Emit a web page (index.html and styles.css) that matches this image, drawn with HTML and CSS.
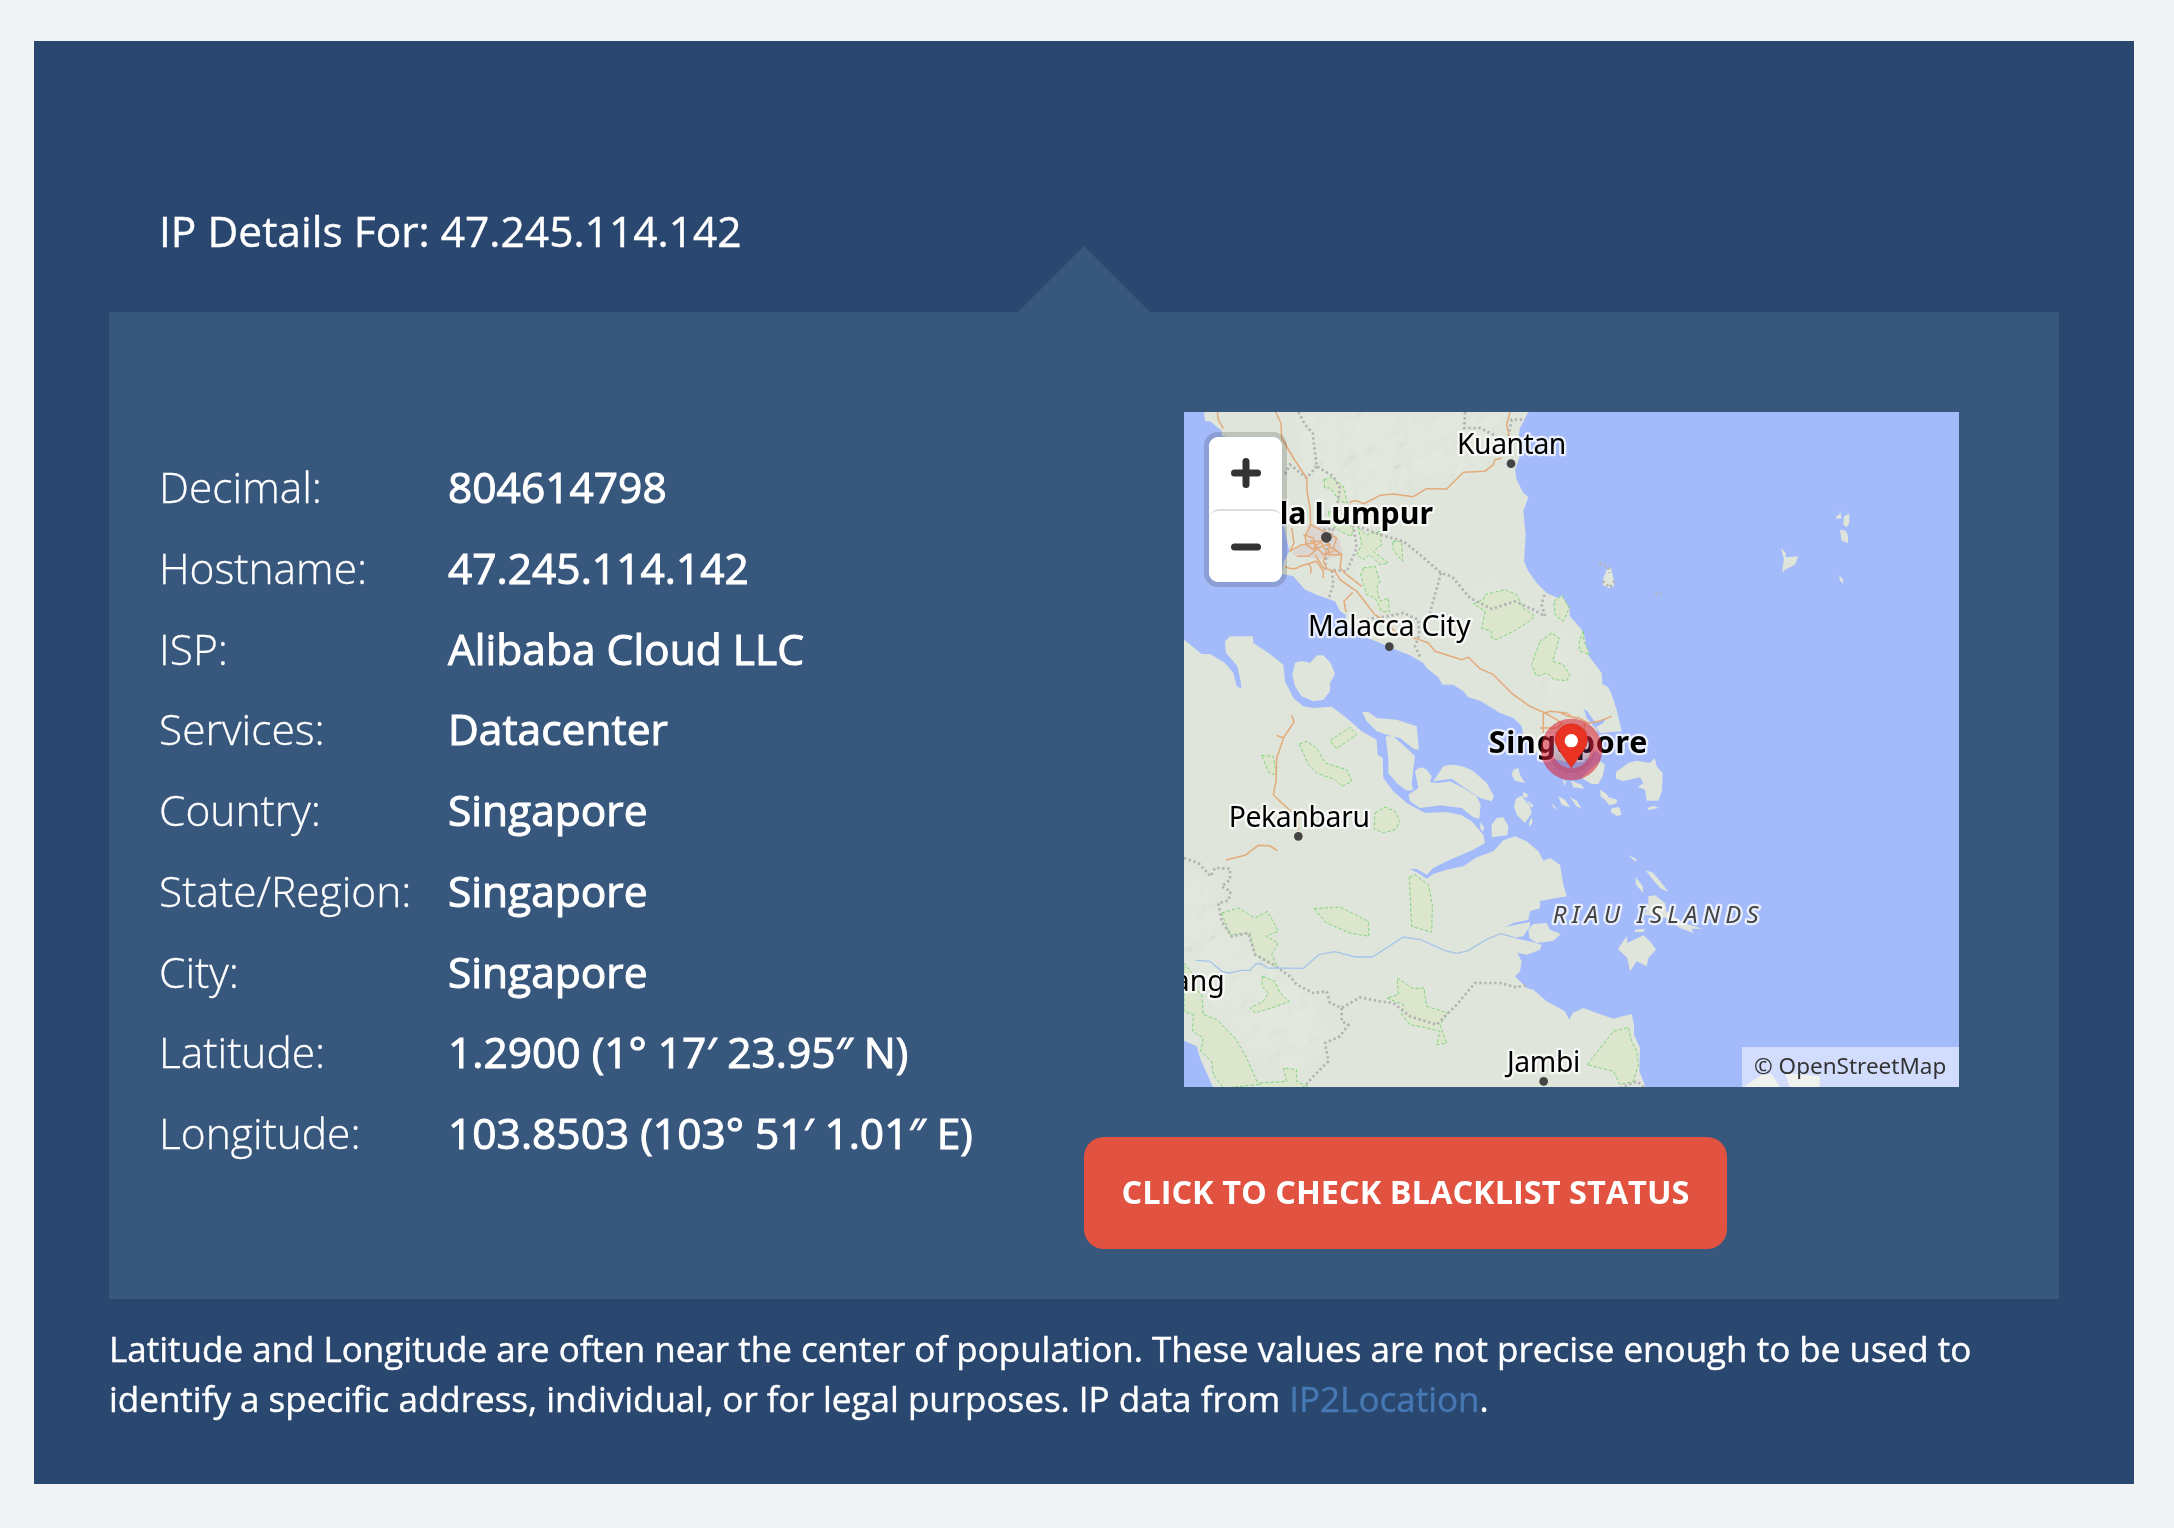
FILE: index.html
```html
<!DOCTYPE html>
<html lang="en">
<head>
<meta charset="utf-8">
<title>IP Details</title>
<link rel="stylesheet" href="styles.css">
</head>
<body>
<main class="card">
  <h1 class="title">IP Details For: 47.245.114.142</h1>
  <section class="panel">
    <dl class="details">
      <dt>Decimal:</dt><dd>804614798</dd>
      <dt>Hostname:</dt><dd>47.245.114.142</dd>
      <dt>ISP:</dt><dd>Alibaba Cloud LLC</dd>
      <dt>Services:</dt><dd>Datacenter</dd>
      <dt>Country:</dt><dd>Singapore</dd>
      <dt>State/Region:</dt><dd>Singapore</dd>
      <dt>City:</dt><dd>Singapore</dd>
      <dt>Latitude:</dt><dd>1.2900 (1° 17′ 23.95″ N)</dd>
      <dt>Longitude:</dt><dd>103.8503 (103° 51′ 1.01″ E)</dd>
    </dl>
    <div class="side">
      <div class="map">
        <svg class="tiles" viewBox="12 12 2325 2025">
          <defs>
            <filter id="relief" x="0" y="0" width="100%" height="100%">
              <feTurbulence type="fractalNoise" baseFrequency="0.012" numOctaves="3" seed="4"/>
              <feDiffuseLighting surfaceScale="40" diffuseConstant="1" lighting-color="#fff"><feDistantLight azimuth="225" elevation="50"/></feDiffuseLighting>
            </filter>
            <filter id="soft"><feGaussianBlur stdDeviation="14"/></filter>
            <mask id="hills" maskUnits="userSpaceOnUse" x="0" y="0" width="2400" height="2100">
              <g fill="#fff" filter="url(#soft)">
                <path d="M330 12H960L900 200 700 220 560 300 620 600 560 560 480 340 400 260Z"/>
                <ellipse cx="960" cy="600" rx="90" ry="90" opacity=".5"/>
                <ellipse cx="1140" cy="790" rx="80" ry="120" opacity=".5"/>
                <path d="M12 1400 100 1420 120 1560 280 1680 400 1760 440 1900 340 2000 180 1900 100 1800 12 1660Z"/>
              </g>
            </mask>
            <path id="land" d="M72 12 75 40 90 40 125 68 125 82 150 90 200 180 290 300 312 355 328 430 312 460 305 497 340 505 375 545 410 560 465 580 480 610 497 620 500 650 540 680 600 705 640 722 690 742 730 765 740 780 775 808 787 830 820 830 850 850 865 868 900 878 960 915 1000 930 1025 955 1030 985 1060 1030 1110 1050 1160 1062 1230 1050 1260 1010 1250 965 1220 930 1212 903 1222 910 1245 942 1278 932 1270 945 1248 958 1260 975 1325 970 1310 905 1295 860 1285 838 1267 828 1265 795 1220 735 1215 690 1205 665 1170 625 1168 600 1145 575 1100 555 1070 525 1045 490 1032 460 1037 380 1030 310 1045 268 1030 255 1010 215 1005 185 1018 150 1015 90 1020 60 1045 12ZM12 695 65 738 90 738 135 765 160 795 170 835 185 842 182 820 172 775 160 760 138 735 135 700 150 685 218 685 220 705 265 735 310 770 315 820 340 870 370 895 400 900 455 896 500 930 545 970 590 995 593 1040 608 1050 610 1110 640 1150 680 1185 735 1215 800 1212 845 1222 875 1240 910 1280 915 1305 880 1325 800 1360 760 1380 740 1400 710 1383 690 1383 715 1395 740 1412 760 1398 800 1385 850 1375 890 1348 940 1330 970 1297 1005 1285 1040 1300 1075 1330 1090 1358 1110 1350 1140 1370 1150 1430 1160 1465 1100 1475 1080 1478 1080 1500 1050 1510 1045 1535 1000 1545 975 1557 1050 1542 1050 1555 1030 1585 1000 1590 1050 1600 1085 1610 1080 1625 1040 1640 1015 1635 1012 1618 1015 1640 1025 1660 1020 1690 1005 1705 1040 1740 1060 1745 1100 1780 1155 1810 1168 1835 1178 1815 1210 1800 1250 1815 1300 1832 1355 1818 1362 1850 1362 1880 1380 1920 1378 1990 1398 2040H100L80 1995 60 1950 50 1915 12 1898ZM345 765Q365 755 390 765L412 742 430 742 452 765 465 798 450 825 450 850 430 875 400 880 365 865 345 835 337 800ZM547 912 565 912 590 930 650 935 710 955 717 1025 700 1022 660 990 620 980 590 970 560 940ZM617 985 640 985 690 1030 705 1045 700 1080 695 1130 700 1145 680 1148 650 1125 625 1095 625 1050ZM705 1090Q720 1070 740 1085L755 1105 750 1122 775 1125 810 1120 850 1140 890 1165 902 1190 898 1232 880 1228 845 1200 780 1192 720 1200 690 1180 685 1160 715 1140ZM760 1120 790 1075Q830 1060 880 1090L920 1125 942 1165 935 1180 900 1170 855 1140 815 1112ZM1000 1085 1015 1080 1020 1100 1035 1125 1005 1118 995 1100ZM1008 1172 1025 1163 1050 1195 1055 1215 1035 1245 1010 1220 1002 1195ZM1030 1152 1045 1160 1040 1170 1028 1165ZM1040 1175 1060 1192 1055 1200ZM1055 1228 1058 1240 1050 1257 1047 1245ZM935 1250 950 1230 970 1228 985 1255 982 1282 935 1288ZM902 1242 912 1258 910 1272 900 1260ZM1045 1565 1060 1548 1100 1545 1110 1565 1143 1578 1120 1598 1070 1605 1048 1590ZM1308 1092 1345 1065 1370 1058 1410 1065 1424 1050 1430 1075 1448 1095 1446 1150 1435 1178 1400 1178 1395 1145 1374 1137 1390 1125 1380 1108 1330 1120 1308 1112ZM1402 1200 1420 1193 1436 1200 1405 1206ZM1205 1110 1245 1070 1262 1060 1275 1070 1268 1105 1255 1128 1235 1128ZM1172 1118 1205 1130 1212 1142 1180 1138ZM1135 1165 1155 1175 1170 1198 1145 1190ZM1170 1168 1190 1178 1205 1202 1190 1195ZM1115 1185 1133 1205 1120 1198ZM1148 1115 1158 1120 1155 1135ZM1260 1145 1280 1158 1285 1168 1312 1175 1308 1187 1288 1192 1275 1175 1262 1165ZM1295 1200 1318 1198 1325 1220 1310 1224 1292 1212ZM1343 1340 1368 1352 1368 1362ZM1367 1407 1388 1435 1390 1455 1368 1430ZM1397 1387 1420 1395 1445 1425 1465 1452 1440 1440 1410 1405ZM1405 1465 1425 1462 1455 1485 1460 1510 1510 1545 1568 1562 1535 1562 1540 1575 1500 1560 1460 1530 1395 1520 1405 1490ZM1365 1565 1395 1562 1390 1572 1365 1572ZM1340 1585 1342 1605 1390 1582 1410 1600 1428 1625 1405 1650 1400 1675 1370 1660 1350 1690 1342 1650 1314 1623ZM1686 2040 1745 2000 1775 1998 1802 2040ZM1815 1995 1920 2005 1918 2040H1830ZM1803 420 1817 435 1818 448 1855 445 1845 470 1815 485 1808 495 1808 475 1812 455ZM1968 325 1978 320 1980 308 1985 330 1970 333ZM1992 325 2008 317 2008 345 2000 358 1990 350ZM1980 365 1998 368 2004 385 2004 405 1985 398ZM1977 502 1988 512 1990 528 1980 518ZM1280 485 1293 480 1300 510 1303 535 1285 540 1268 530 1270 510Z"/>
            <clipPath id="shore"><use href="#land"/></clipPath>
          </defs>
          <use class="land" href="#land"/>
          <g class="relief" clip-path="url(#shore)"><g mask="url(#hills)"><rect width="2400" height="2100" filter="url(#relief)"/></g></g>
          <path class="urban" d="M385 350 440 350 480 400 488 440 440 455 330 440 380 400Z"/>
          <g class="park">
            <path d="M432 215 455 208 490 235 502 285 480 280 450 240 434 240Z"/>
            <path d="M445 310 470 320 490 350 520 355 515 385 480 370 450 345ZM535 360 560 380 600 370 605 410 580 430 625 465 600 470 570 440 550 455 530 440 545 410ZM638 400 665 400 668 460 650 440 640 425Z"/>
            <path d="M550 480 585 475 600 520 590 540 600 580 625 570 628 612 605 610 585 570 560 560 542 500Z"/>
            <path d="M880 588 910 575 915 560 975 545 1010 560 1030 600 1065 625 1040 645 1000 670 950 695 935 690 935 670 905 660 915 610ZM1122 580 1145 562 1168 600 1150 640 1125 620Z"/>
            <path d="M1080 700 1115 675 1138 690 1118 760 1150 770 1170 800 1160 818 1122 815 1100 795 1070 805 1055 770ZM1210 670 1212 700 1230 740 1200 730 1197 700Z"/>
            <path d="M450 998 510 958 530 980 470 1022ZM358 1008 380 1000 410 1020 435 1065 500 1085 516 1120 485 1135 465 1115 410 1095 385 1070ZM244 1042 280 1045 290 1100 268 1095Z"/>
            <path d="M585 1215 615 1197 645 1210 660 1240 645 1265 610 1275 582 1262ZM688 1408 705 1400 745 1430 757 1490 755 1573 695 1555ZM402 1502 480 1497 565 1540 567 1585 510 1575 440 1545Z"/>
            <path d="M125 1515 175 1500 225 1530 262 1510 285 1550 295 1570 258 1585 295 1605 275 1640 295 1680 225 1640 210 1575 150 1580Z"/>
            <path d="M248 1705 285 1720 300 1755 328 1780 290 1795 225 1815 210 1800 250 1780 265 1755 245 1735Z"/>
            <path d="M12 1665 40 1700 45 1740 65 1760 70 1820 110 1835 165 1890 200 1950 235 2030 130 2040 100 2000 95 1960 62 1930 70 1890 38 1870 40 1820 12 1810ZM240 2025 320 2020 310 1980 350 1985 350 2020 390 2040H240Z"/>
            <path d="M652 1710 700 1742 732 1740 740 1795 805 1815 780 1850 800 1905 770 1910 780 1870 740 1860 690 1850 665 1820 670 1790 620 1770 655 1760Z"/>
            <path d="M1222 1970 1300 1870 1345 1858 1355 1900 1370 1930 1375 1970 1360 2020 1320 2030 1300 1990Z"/>
          </g>
          <g class="border">
            <path d="M355 12 375 50 398 75 410 175 460 205 480 240 470 300 520 350 600 380 670 400 720 440 783 495 815 505 870 570 935 603 1005 580 1060 605 1095 625 1085 590 1095 555M783 495 765 560 750 615M410 175 380 210 330 170 312 205M855 12 853 60 900 60 950 85M985 85 995 35 1035 35M520 350 530 420 500 490 455 485 460 530 445 575M430 365 460 362 440 430 435 485M545 635 620 625 670 615 715 635 718 680 705 715 720 745"/>
            <path d="M12 1350 55 1365 92 1405 105 1380 150 1382 150 1415 125 1435 152 1450 145 1478 115 1485 125 1540 155 1585 205 1575 225 1640 280 1670 330 1705 350 1730 400 1755 440 1750 450 1785 485 1800 540 1768 600 1780 640 1785 690 1825 770 1850 830 1790 885 1725 960 1725 1010 1738 1040 1730M485 1800 485 1840 505 1850 480 1885 435 1905 445 1960 400 2005 370 2040M1320 2040 1370 2020 1395 2040"/>
            <path d="M1258 465 1285 478 1288 495M1268 520 1290 538 1303 520M1426 558 1444 558"/>
          </g>
          <path class="river" d="M47 1657 90 1660 125 1690 147 1695 185 1687 210 1687 228 1667 245 1668 262 1680 370 1681 417 1640 465 1631 525 1647 577 1647 670 1587 722 1595 795 1628 830 1636 865 1628 920 1594 962 1577 1003 1588"/>
          <g class="road">
            <path d="M112 12 115 35 130 62M287 12 303 45 305 90 340 150 380 210 382 255 390 300 392 350 375 385 380 410M508 285Q525 270 550 288L600 262 640 258 700 266 740 242 800 243 850 193 915 190 940 170 945 155 965 150M990 12 980 50 988 85"/>
            <path d="M392 350 440 375 470 390 460 420 485 440 480 480 500 500 545 535M380 410 400 425 440 410 470 430M335 360 342 405 330 430 365 410 400 405 430 440 460 430M350 445 385 445 410 425 400 390 370 380M315 475Q340 490 360 475L410 460 430 490 430 510M385 465 393 480 392 497M405 440 430 480 465 490 480 515 530 550 585 620 610 635 650 675 710 692 745 705 765 730 845 755 865 748 900 782 940 800 1000 860 1050 895 1095 915 1130 935 1150 950M518 553 492 580 498 612M390 400H420L440 430 430 460 440 480M400 420 430 395 450 410 445 440 485 440"/>
            <path d="M1095 915 1110 910 1160 915 1180 930 1200 930M1090 915 1090 975M1080 960 1130 960 1150 945M1140 913 1163 925 1197 930 1225 945 1255 940 1295 925M1213 945 1213 975"/>
            <path d="M335 922 342 942 310 990 290 982M311 990 290 1050 288 1120 280 1160 300 1180 335 1212M355 1230V1265M138 1356 195 1342 235 1312 270 1314 292 1328"/>
          </g>
          <g class="dot"><circle cx="993" cy="167" r="13"/><circle cx="439" cy="388" r="16"/><circle cx="628" cy="716" r="13"/><circle cx="355" cy="1285" r="13"/><circle cx="1091" cy="2020" r="13"/></g>
          <g class="town">
            <text x="831" y="138" textLength="328">Kuantan</text>
            <text x="384" y="685" textLength="488">Malacca City</text>
            <text x="146" y="1257" textLength="424">Pekanbaru</text>
            <text x="134" y="1750" text-anchor="end">Padang</text>
            <text x="981" y="1991" textLength="220">Jambi</text>
          </g>
          <g class="capital">
            <text x="759" y="347" text-anchor="end">Kuala Lumpur</text>
            <text x="926" y="1036" textLength="476">Singapore</text>
          </g>
          <text class="region" x="1118" y="1544" textLength="618">RIAU ISLANDS</text>
          <g class="pin">
            <circle class="halo" cx="1174.500" cy="1024.500" r="82"/>
            <circle class="halo-ring" cx="1174.500" cy="1024.500" r="64"/>
            <circle class="halo-core" cx="1174.500" cy="1024.500" r="56"/>
            <path class="drop" d="M1174 1079 1134 1022A48 48 0 1 1 1214 1022Z"/>
            <circle class="hole" cx="1174" cy="998" r="20"/>
          </g>
        </svg>
        <div class="zoom">
          <button class="zoom-btn" aria-label="Zoom in"><svg viewBox="0 0 30 30"><path d="M15 3.500V26.500M3.500 15H26.500"/></svg></button>
          <button class="zoom-btn" aria-label="Zoom out"><svg viewBox="0 0 30 30"><path d="M3.500 15H26.500"/></svg></button>
        </div>
        <div class="credit">© OpenStreetMap</div>
      </div>
      <button class="check">CLICK TO CHECK BLACKLIST STATUS</button>
    </div>
  </section>
  <p class="note">Latitude and Longitude are often near the center of population. These values are not precise enough to be used to identify a specific address, individual, or for legal purposes. IP data from <a class="link" href="#">IP2Location</a>.</p>
</main>
</body>
</html>
```
FILE: styles.css
```css
* { box-sizing: border-box; }
body { margin: 0; padding: 41px 40px 43px 34px; background: #f2f3f5; font-family: "Open Sans", "Noto Sans", sans-serif; color: #fff; }
.card { height: 1443px; padding: 160px 75px 0; background: #2a476f; }
.title { margin: 0; padding-left: 50px; height: 111px; font-size: 42.5px; line-height: 60px; font-weight: 400; -webkit-text-stroke: .4px #fff; }
.panel { position: relative; display: flex; height: 987px; padding: 100px 100px 50px 50px; background: #38577d; }
.panel::before { content: ""; position: absolute; left: 909px; top: -66px; border: 66px solid transparent; border-top: 0; border-bottom-color: #38577d; }
.details { display: grid; grid-template-columns: 289px 1fr; grid-auto-rows: 80.75px; align-content: start; width: 925px; margin: 0; padding-top: 35px; font-size: 42.5px; line-height: 80px; white-space: nowrap; }
.details dt { font-weight: 300; -webkit-text-stroke: .3px #fff; }
.details dd { margin: 0; font-weight: 400; -webkit-text-stroke: 1px #fff; }
.side { display: flex; flex-direction: column; gap: 50px; }
.map { position: relative; width: 775px; height: 675px; margin-left: 100px; overflow: hidden; background: #a4bbfb; }
.tiles { display: block; width: 775px; height: 675px; font-family: "Noto Sans", sans-serif; }
.land { fill: #dfe5da; }
.relief { mix-blend-mode: soft-light; opacity: .28; }
.urban { fill: #dcd6d3; }
.park { fill: #dbe6cd; stroke: #83d47e; stroke-width: 3; stroke-dasharray: 10 6; }
.border { fill: none; stroke: #b3b3b3; stroke-width: 8; stroke-dasharray: 7 8; }
.river { fill: none; stroke: #a6c5ea; stroke-width: 4; }
.road { fill: none; stroke: #e3ab7b; stroke-width: 4.5; stroke-linejoin: round; }
.dot { fill: #444; }
.town, .capital, .region { paint-order: stroke; stroke: rgba(255, 255, 255, .75); stroke-width: 14; stroke-linejoin: round; }
.town { font-size: 85px; }
.capital { font-size: 91px; font-weight: 700; }
.region { font-size: 72px; font-style: italic; fill: #444; }
.halo { fill: none; stroke: rgba(215, 30, 50, .55); stroke-width: 20; }
.halo-ring { fill: none; stroke: rgba(200, 30, 60, .62); stroke-width: 16; }
.halo-core { fill: rgba(130, 60, 110, .35); }
.drop { fill: #ea3323; stroke: #d22a1c; stroke-width: 2; stroke-linejoin: round; }
.hole { fill: #fff; }
.zoom { position: absolute; left: 20px; top: 20px; width: 83px; height: 155px; border: 5px solid rgba(0, 0, 0, .15); border-radius: 14px; background: #fff; background-clip: padding-box; }
.zoom-btn { display: flex; align-items: center; justify-content: center; width: 73px; height: 72px; margin: 0; padding: 0; border: 0; border-radius: 10px; background: #fff; }
.zoom-btn + .zoom-btn { height: 73px; border-top: 2px solid #ddd; }
.zoom-btn svg { width: 30px; height: 30px; fill: none; stroke: #333; stroke-width: 7; stroke-linecap: round; }
.credit { position: absolute; right: 0; bottom: 0; width: 217px; height: 40px; padding-left: 12px; background: rgba(255, 255, 255, .5); color: #333; font: 22.5px/38px "Noto Sans", sans-serif; white-space: nowrap; }
.check { width: 643px; height: 112px; padding: 0 0 3px; border: 0; border-radius: 20px; background: #e15241; color: #fff; font: 700 32.5px "Open Sans", sans-serif; white-space: nowrap; }
.note { margin: 25px 0 0; font-size: 35px; line-height: 50px; -webkit-text-stroke: .4px #fff; }
.link { color: #4678b4; -webkit-text-stroke-color: #4678b4; text-decoration: none; }
```
